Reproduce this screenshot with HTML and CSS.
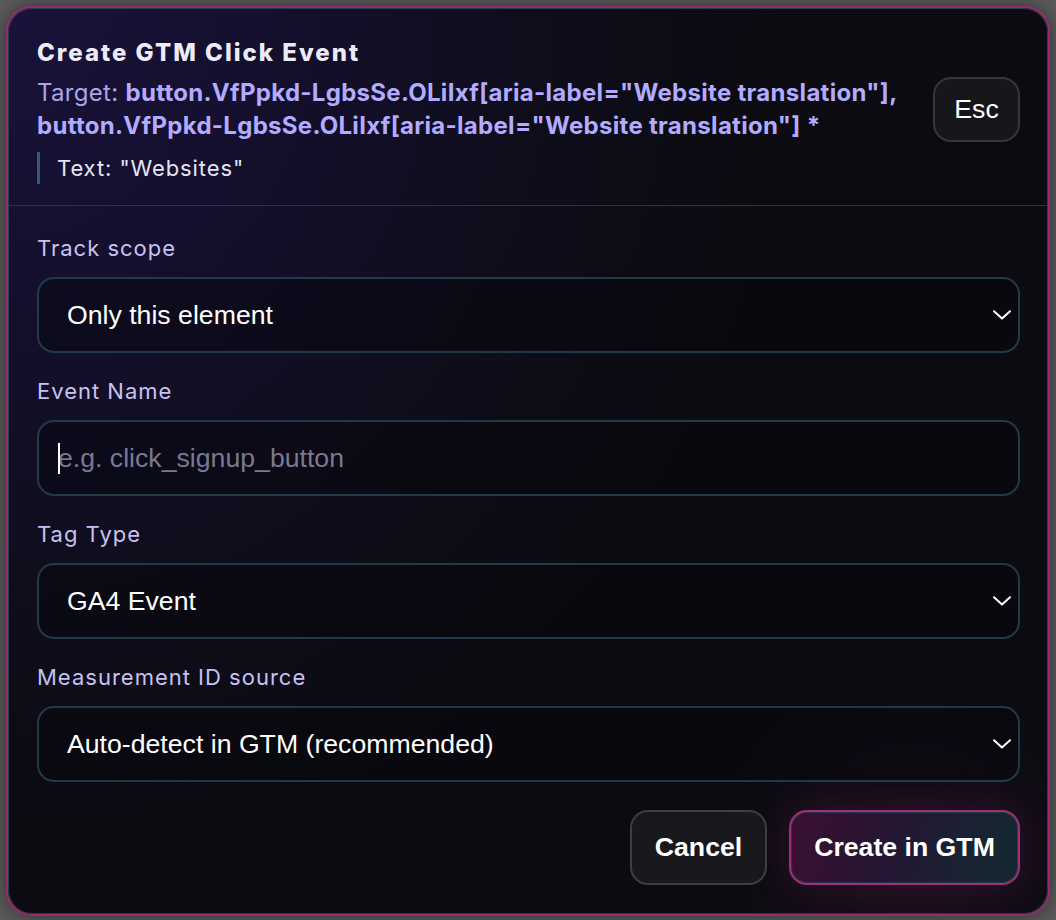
FILE: index.html
```html
<!DOCTYPE html>
<html lang="en">
<head>
<meta charset="utf-8">
<title>Create GTM Click Event</title>
<link rel="stylesheet" href="styles.css">
</head>
<body>
<div class="modal">
  <header class="modal-header">
    <div class="header-main">
      <h1 class="title">Create GTM Click Event</h1>
      <p class="target"><span class="target-label">Target:</span> <span class="selector">button.VfPpkd-LgbsSe.OLiIxf[aria-label="Website translation"],</span> <span class="selector">button.VfPpkd-LgbsSe.OLiIxf[aria-label="Website translation"] *</span></p>
      <p class="element-text">Text: "Websites"</p>
    </div>
    <button class="btn btn-esc" type="button">Esc</button>
  </header>
  <div class="modal-body">
    <div class="group">
      <div class="label">Track scope</div>
      <div class="field select">
        <span class="value">Only this element</span>
        <svg class="chevron" width="18" height="10" viewBox="0 0 18 10"><polyline points="1,1.2 9,8.6 17,1.2" fill="none" stroke="#fff" stroke-width="2" stroke-linecap="round" stroke-linejoin="round"/></svg>
      </div>
    </div>
    <div class="group">
      <div class="label">Event Name</div>
      <div class="field input">
        <span class="caret"></span>
        <span class="placeholder">e.g. click_signup_button</span>
      </div>
    </div>
    <div class="group">
      <div class="label">Tag Type</div>
      <div class="field select">
        <span class="value">GA4 Event</span>
        <svg class="chevron" width="18" height="10" viewBox="0 0 18 10"><polyline points="1,1.2 9,8.6 17,1.2" fill="none" stroke="#fff" stroke-width="2" stroke-linecap="round" stroke-linejoin="round"/></svg>
      </div>
    </div>
    <div class="group">
      <div class="label">Measurement ID source</div>
      <div class="field select">
        <span class="value">Auto-detect in GTM (recommended)</span>
        <svg class="chevron" width="18" height="10" viewBox="0 0 18 10"><polyline points="1,1.2 9,8.6 17,1.2" fill="none" stroke="#fff" stroke-width="2" stroke-linecap="round" stroke-linejoin="round"/></svg>
      </div>
    </div>
    <div class="actions">
      <button class="btn btn-cancel" type="button">Cancel</button>
      <button class="btn btn-create" type="button">Create in GTM</button>
    </div>
  </div>
</div>
</body>
</html>
```
FILE: styles.css
```css
html, body {
  margin: 0;
  padding: 0;
}
body {
  background: #5a5a5a;
  padding: 6px 0 0 6px;
  height: 920px;
  box-sizing: border-box;
  overflow: hidden;
  font-family: Inter, "Noto Sans", sans-serif;
}
.modal {
  width: 1044px;
  height: 910px;
  box-sizing: border-box;
  border: 2px solid #98296b;
  border-radius: 26px;
  overflow: hidden;
  display: flex;
  flex-direction: column;
  background:
    radial-gradient(circle at 87% 95%, rgba(110, 30, 85, 0.16) 0%, rgba(110, 30, 85, 0) 16%),
    radial-gradient(75% 95% at 0% 0%, #19123a 0%, #130f2a 40%, #0e0d1a 70%, #0b0b11 100%);
  box-shadow: inset 0 0 0 1px #24404d, 0 0 18px rgba(0, 0, 0, 0.45);
}
.modal-header {
  display: flex;
  align-items: center;
  gap: 20px;
  padding: 31px 28px 21px 29px;
  border-bottom: 1px solid #22384a;
}
.header-main {
  flex: 1;
  min-width: 0;
}
.title {
  margin: 0 0 9px;
  font-size: 24px;
  line-height: 28px;
  font-weight: 800;
  letter-spacing: 2px;
  color: #ecebf8;
}
.target {
  margin: 0;
  font-size: 24px;
  line-height: 33px;
  letter-spacing: 0.3px;
  color: #aba6e6;
}
.selector {
  font-weight: 700;
  color: #b2abff;
}
.element-text {
  margin: 10px 0 0;
  padding-left: 17px;
  border-left: 3px solid #36587a;
  font-size: 22px;
  line-height: 32px;
  letter-spacing: 0.9px;
  color: #e6e4f4;
}
.btn {
  font-family: "Liberation Sans", Arial, sans-serif;
  font-size: 26.67px;
  color: #ffffff;
  border-radius: 18px;
  cursor: pointer;
}
.btn-esc {
  flex: none;
  width: 87px;
  height: 65px;
  padding: 0;
  margin-bottom: 4px;
  background: #17171b;
  border: 2px solid #35353d;
}
.modal-body {
  flex: 1;
  display: flex;
  flex-direction: column;
  gap: 26px;
  padding: 30px 28px 26px 29px;
}
.group {
  display: flex;
  flex-direction: column;
  gap: 17px;
}
.label {
  font-size: 22px;
  line-height: 24px;
  letter-spacing: 1px;
  color: #c7c1f3;
}
.field {
  height: 76px;
  box-sizing: border-box;
  border: 2px solid #1f3a48;
  border-radius: 17px;
  background: rgba(5, 5, 10, 0.38);
  display: flex;
  align-items: center;
  font-family: "Liberation Sans", Arial, sans-serif;
  font-size: 26.67px;
}
.select {
  justify-content: space-between;
  padding: 0 7px 0 28px;
  color: #ffffff;
}
.chevron {
  display: block;
  flex: none;
}
.input {
  padding: 0 19px;
}
.caret {
  flex: none;
  width: 2px;
  height: 31px;
  background: #ffffff;
  margin-right: -2px;
  position: relative;
  z-index: 1;
}
.placeholder {
  color: #7b7891;
}
.actions {
  margin-top: 2px;
  display: flex;
  justify-content: flex-end;
  gap: 22px;
}
.btn-cancel {
  width: 137px;
  height: 75px;
  font-weight: 700;
  background: #18181d;
  border: 2px solid #3d3d45;
}
.btn-create {
  width: 231px;
  height: 75px;
  font-weight: 700;
  border: 2px solid #a12f76;
  background: linear-gradient(100deg, #3a0f31 0%, #241632 45%, #1a2232 75%, #13282f 100%);
  box-shadow: inset 0 0 0 1px rgba(40, 80, 100, 0.55), 0 0 36px rgba(150, 40, 110, 0.22);
}
```
